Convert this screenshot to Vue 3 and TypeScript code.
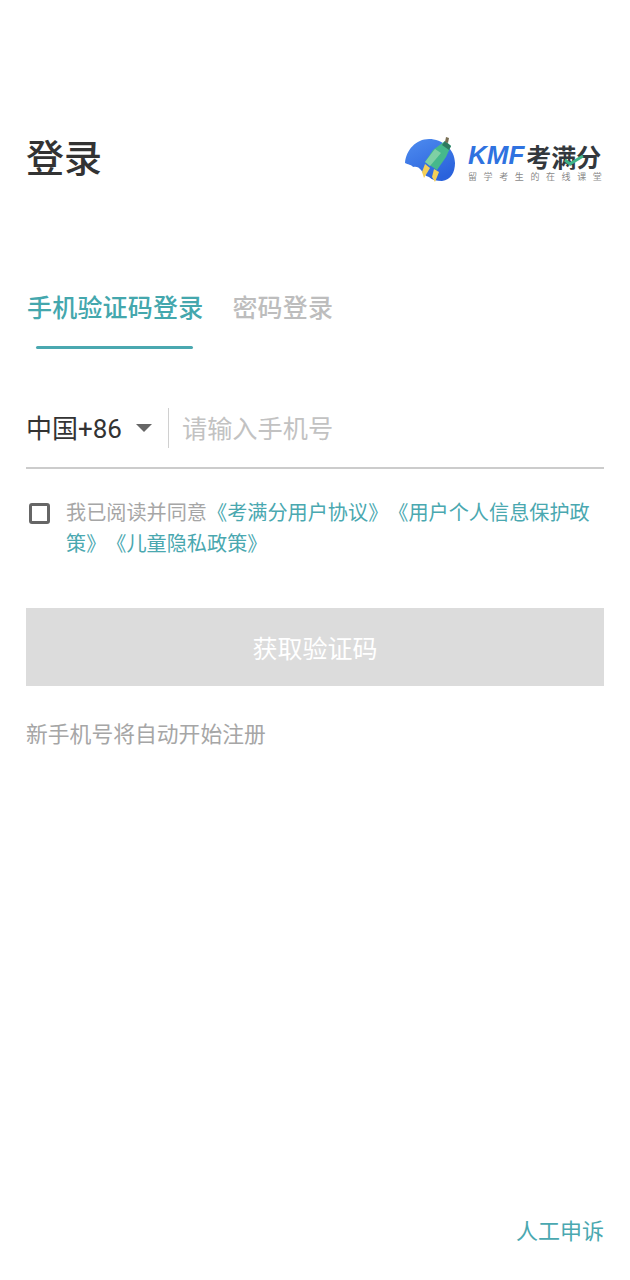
<template>
  <div class="page">
    <header class="head">
      <h1 class="title">登录</h1>
      <div class="logo">
        <svg class="logo-mark" width="52" height="46" viewBox="0 0 52 46">
          <defs>
            <linearGradient id="blob" x1="0" y1="0" x2="0.6" y2="1">
              <stop offset="0" stop-color="#4f8df0" />
              <stop offset="1" stop-color="#2a62dc" />
            </linearGradient>
          </defs>
          <path d="M24 2C11 2 1 13 0 26c3 2 6 1 8 4 3-1 6 0 8 3 2 3 4 6 8 7 3 3 8 4 13 4 9-1 13-9 13-18C50 12 37 2 24 2Z" fill="url(#blob)" />
          <path d="M40 4l6 5-5 11-9 13-12-8 8-12Z" fill="#46b88c" />
          <path d="M30 12l6 4-11 13-5-4Z" fill="#7fd0a4" />
          <path d="M40 4l6 5-2 4-7-5Z" fill="#2f7a60" />
          <path d="M41 0l3 1-1 5-3-1Z" fill="#7a6f55" />
          <path d="M20 27l5 4-6 10-2-6Z" fill="#f4cf58" />
          <path d="M29 32l5 3-4 10-3-5Z" fill="#f4cf58" />
        </svg>
        <div class="logo-text">
          <div class="logo-main">
            <span class="kmf">KMF</span><span class="cn">考满分</span>
            <svg class="logo-check" width="20" height="12" viewBox="0 0 20 12">
              <path d="M1 6l5 4L19 2" fill="none" stroke="#3fb58a" stroke-width="3" />
            </svg>
          </div>
          <div class="logo-sub">留学考生的在线课堂</div>
        </div>
      </div>
    </header>

    <nav class="tabs">
      <div class="tab active">手机验证码登录</div>
      <div class="tab">密码登录</div>
    </nav>
    <div class="tab-line"></div>

    <div class="phone">
      <span class="code">中国+86</span>
      <span class="arrow"></span>
      <span class="divider"></span>
      <span class="placeholder">{{ placeholder }}</span>
    </div>

    <div class="agree">
      <span class="check"></span>
      <p>
        我已阅读并同意<a v-for="doc in docs" :key="doc">{{ doc }}</a>
      </p>
    </div>

    <button type="button" class="submit">获取验证码</button>
    <p class="note">新手机号将自动开始注册</p>

    <div class="spacer"></div>
    <a class="appeal">人工申诉</a>
  </div>
</template>

<script setup lang="ts">
const placeholder = '请输入手机号'
const docs: string[] = ['《考满分用户协议》', '《用户个人信息保护政策》', '《儿童隐私政策》']
</script>

<style>
body {
  background: #fff;
}
</style>

<style scoped>
.page {
  box-sizing: border-box;
  height: 1280px;
  padding: 137px 26px 32px;
  display: flex;
  flex-direction: column;
  font-family: 'Roboto', 'Noto Sans CJK SC', sans-serif;
  overflow: hidden;
}

.head {
  display: flex;
  justify-content: space-between;
  align-items: center;
  height: 48px;
  padding-right: 2px;
}

.title {
  margin: 0 0 4px;
  font-size: 38px;
  line-height: 44px;
  font-weight: 500;
  color: #333;
}

.logo {
  display: flex;
  align-items: flex-start;
  gap: 11px;
}

.logo-mark {
  margin-top: -3px;
}

.logo-text {
  width: 134px;
  padding-top: 1px;
}

.logo-main {
  position: relative;
  display: flex;
  align-items: center;
  height: 30px;
  white-space: nowrap;
}

.logo-check {
  position: absolute;
  left: 96px;
  top: 13px;
}

.kmf {
  font-family: 'Liberation Sans', sans-serif;
  font-size: 26px;
  font-weight: 700;
  font-style: italic;
  color: #2f72e0;
}

.cn {
  margin-left: 2px;
  font-size: 25px;
  font-weight: 700;
  color: #33383d;
}

.logo-sub {
  font-size: 9px;
  line-height: 12px;
  letter-spacing: 6.6px;
  color: #8a8a8a;
  white-space: nowrap;
}

.tabs {
  display: flex;
  gap: 29px;
  margin-top: 106px;
  height: 36px;
  padding-left: 1px;
}

.tab {
  font-size: 25px;
  letter-spacing: 0.2px;
  line-height: 36px;
  font-weight: 500;
  color: #bdbdbd;
}

.tab.active {
  color: #44a7ad;
}

.tab-line {
  width: 157px;
  height: 3px;
  margin: 19px 0 0 10px;
  border-radius: 2px;
  background: #4aa8b0;
}

.phone {
  display: flex;
  align-items: center;
  height: 78px;
  padding-top: 40px;
  border-bottom: 2px solid #ccc;
}

.code {
  margin-bottom: 3px;
  font-size: 26px;
  color: #333;
}

.arrow {
  width: 0;
  height: 0;
  margin-left: 14px;
  border-left: 8px solid transparent;
  border-right: 8px solid transparent;
  border-top: 8px solid #666;
}

.divider {
  width: 1px;
  height: 40px;
  margin-left: 16px;
  background: #d0d0d0;
}

.placeholder {
  margin-left: 13px;
  margin-bottom: 3px;
  font-size: 25.2px;
  color: #c2c2c2;
}

.agree {
  display: flex;
  margin-top: 29px;
}

.check {
  flex: none;
  box-sizing: border-box;
  width: 21px;
  height: 21px;
  margin: 5px 0 0 3px;
  border: 3px solid #666;
  border-radius: 3px;
}

.agree p {
  margin: 0 0 0 16px;
  font-size: 20.15px;
  line-height: 31px;
  color: #a6a6a6;
  text-spacing-trim: space-all;
}

.agree a {
  color: #4aa8b0;
}

.submit {
  height: 78px;
  margin-top: 48px;
  border: none;
  background: #dcdcdc;
  color: #fff;
  font-family: inherit;
  font-size: 25px;
}

.note {
  margin: 33px 0 0;
  font-size: 21.8px;
  line-height: 32px;
  color: #a6a6a6;
}

.spacer {
  flex: 1;
}

.appeal {
  align-self: flex-end;
  font-size: 22px;
  line-height: 32px;
  color: #4aa8b0;
}
</style>
